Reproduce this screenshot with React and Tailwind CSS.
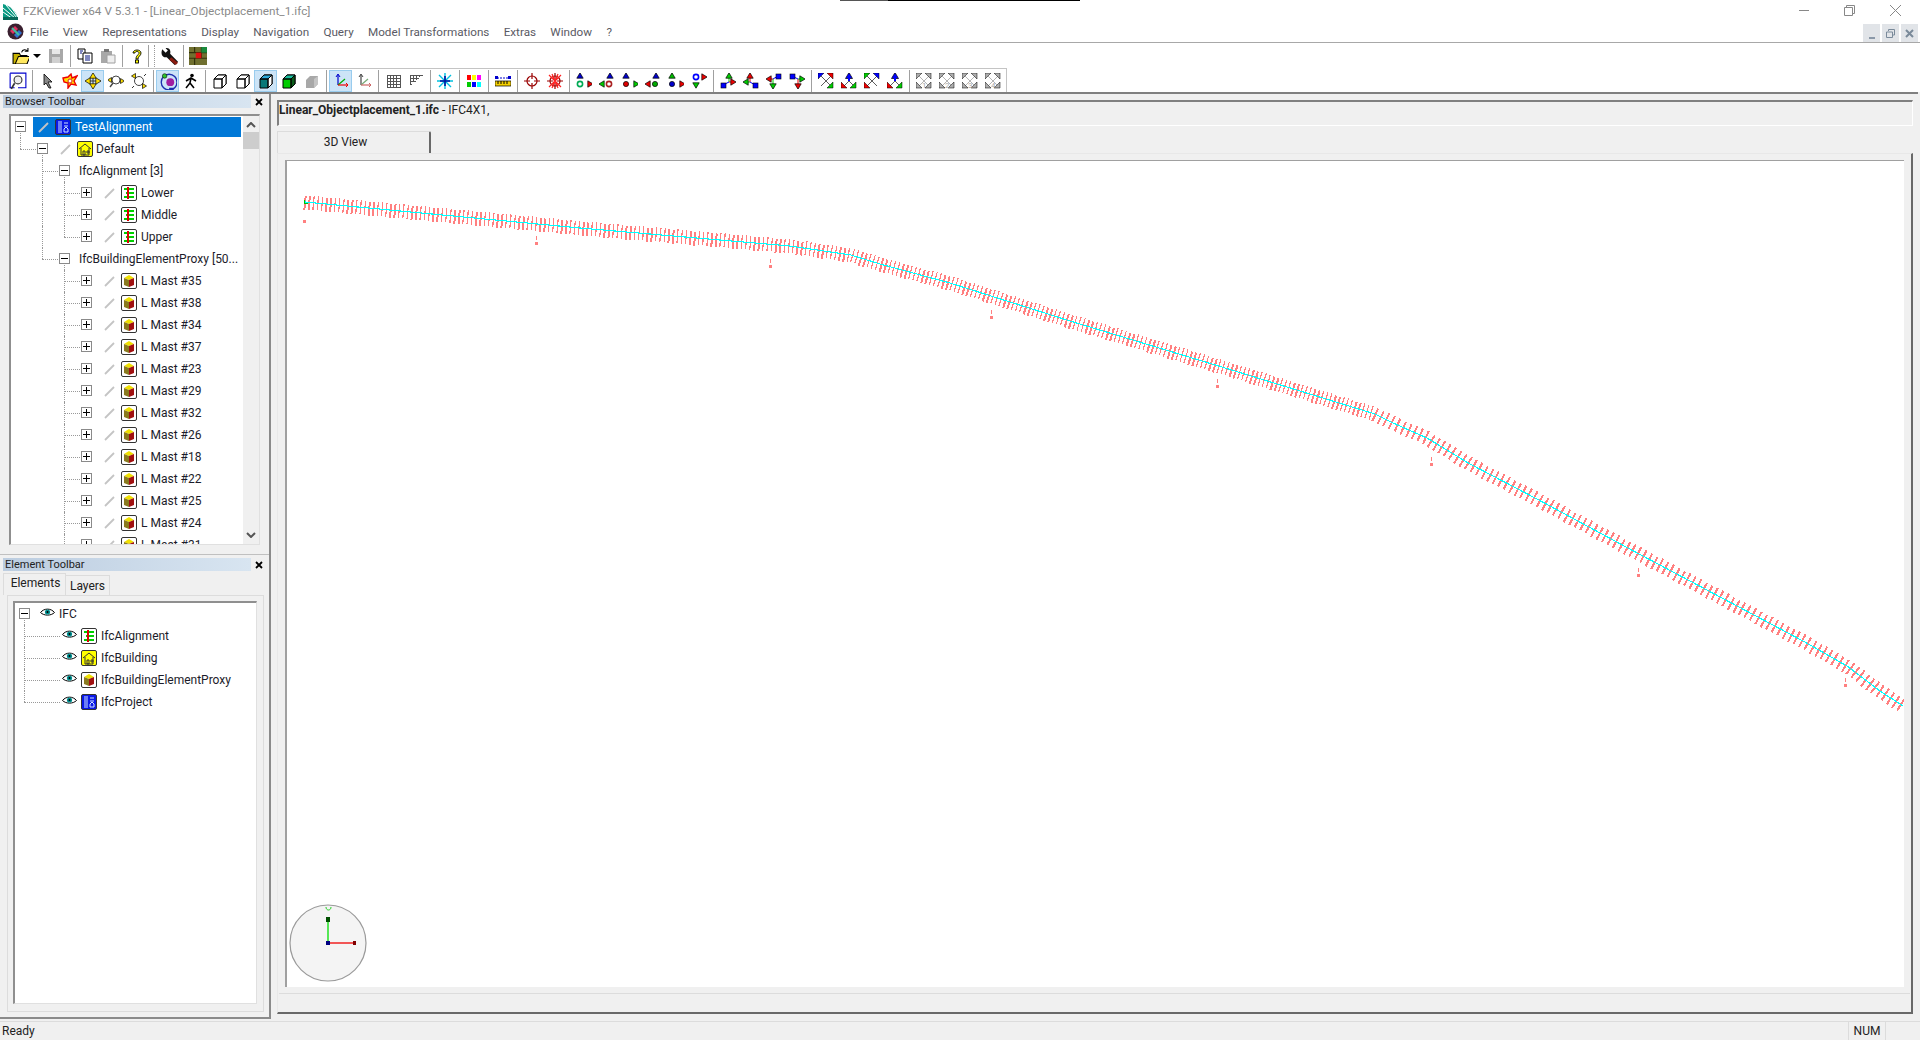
const font = "font-['Roboto','Liberation_Sans',sans-serif]";

// ---- small pixel style icons ----
const Svg = ({ children, size = 16, className = '' }) => (
  <svg width={size} height={size} viewBox="0 0 16 16" className={className}>{children}</svg>
);

const Tri = ({ x, y, d, c, r = 3.2 }) => {
  const p = {
    u: `${x},${y - r} ${x + r},${y + r - 1} ${x - r},${y + r - 1}`,
    d: `${x},${y + r} ${x + r},${y - r + 1} ${x - r},${y - r + 1}`,
    l: `${x - r},${y} ${x + r - 1},${y - r} ${x + r - 1},${y + r}`,
    r: `${x + r},${y} ${x - r + 1},${y - r} ${x - r + 1},${y + r}`,
  }[d];
  return <polygon points={p} fill={c} stroke="#000" strokeWidth="0.7" />;
};

const Dot = ({ x, y, c, ring }) => (
  <circle cx={x} cy={y} r={2.6} fill={ring ? '#fff' : c} stroke={ring ? c : '#000'} strokeWidth={ring ? 1.6 : 0.7} />
);

const ViewIcon = ({ top, side, sideColor, circle, ring }) => (
  <Svg>
    <Tri x={side === 'r' ? 4 : 11} y={3} d="u" c={top} />
    <Dot x={side === 'r' ? 4 : 10} y={11} c={circle} ring={ring} />
    {side === 'r' ? <Tri x={14} y={11} d="r" c={sideColor} /> : <Tri x={3} y={11} d="l" c={sideColor} />}
  </Svg>
);

const Triad = ({ v, vc, h, hc, sq }) => {
  const cx = sq[0] < 8 ? 9 : 7;
  const cy = sq[1] < 8 ? 6 : 9;
  return (
    <Svg>
      <path d={`M${cx} ${cy}V${v === 'u' ? 3 : 13}`} stroke={vc} fill="none" />
      <path d={`M${cx} ${cy}H${h === 'r' ? 13 : 3}`} stroke={hc} fill="none" />
      <path d={`M${cx} ${cy}L${sq[0] + 2} ${sq[1] + 2}`} stroke="#00f" fill="none" />
      <Tri x={cx} y={v === 'u' ? 3 : 13} d={v} c={vc} />
      <Tri x={h === 'r' ? 13 : 3} y={cy} d={h} c={hc} />
      <rect x={sq[0]} y={sq[1]} width="5" height="5" fill="#00f" stroke="#000" strokeWidth="0.6" />
    </Svg>
  );
};

const Corner = ({ x, y, c }) => {
  const a = x < 8 ? x : x + 6;
  const b = y < 8 ? y : y + 6;
  const sx = x < 8 ? 1 : -1;
  const sy = y < 8 ? 1 : -1;
  return <polygon points={`${a},${b} ${a + sx * 6},${b} ${a},${b + sy * 6}`} fill={c} stroke="#000" strokeWidth="0.5" />;
};

const Diagonal = ({ tl, tr, br, bl, up }) => (
  <Svg>
    <path d={up ? 'M8 8V2M8 8L3 13M8 8L13 13' : 'M3 3L13 13M13 3L3 13'} stroke="#333" strokeWidth="0.8" fill="none" />
    {tl && <Corner x={0} y={0} c={tl} />}
    {tr && <Corner x={9} y={0} c={tr} />}
    {br && <Corner x={9} y={9} c={br} />}
    {bl && <Corner x={0} y={9} c={bl} />}
    {up && <><Tri x={8} y={3} d="u" c="#00f" r={3.5} /><rect x="7" y="5" width="2" height="3" fill="#00f" /></>}
  </Svg>
);

const NumDiagonal = ({ n }) => (
  <Svg>
    <path d="M3 3L13 13M13 3L3 13" stroke="#b4b4b4" strokeWidth="1" fill="none" />
    <Corner x={0} y={0} c="#adadad" />
    <Corner x={9} y={0} c="#adadad" />
    <Corner x={9} y={9} c="#adadad" />
    <Corner x={0} y={9} c="#adadad" />
    <text x="6" y="14.5" fontSize="8" fill="#a8a8a8">{n}</text>
  </Svg>
);

const Cube = ({ top, left, right, wire }) => (
  <Svg>
    <path d="M2 6L6 2H14V11L10 15H2Z" fill={wire ? '#fff' : left} stroke="#000" />
    <path d="M2 6L6 2H14L10 6Z" fill={wire ? '#fff' : top} stroke="#000" />
    <path d="M10 6L14 2V11L10 15Z" fill={wire ? '#fff' : right} stroke="#000" />
    <path d="M2 6H10V15" fill="none" stroke="#000" />
  </Svg>
);

const Axes = ({ gray }) => (
  <Svg>
    <path d="M5 12V2" stroke={gray ? '#444' : '#00c'} strokeWidth="1.2" fill="none" />
    <path d="M5 12L12 6" stroke={gray ? '#7a7' : '#0a0'} strokeWidth="1.2" fill="none" />
    <path d="M5 12H15" stroke={gray ? '#c66' : '#e00'} strokeWidth="1.2" fill="none" />
    <path d="M3 4L5 1L7 4" stroke={gray ? '#444' : '#00c'} fill="none" />
    <path d="M13 10L15 12L13 14" stroke={gray ? '#c66' : '#e00'} fill="none" />
  </Svg>
);

const Grid = ({ partial }) => (
  <Svg>
    <path
      d={partial
        ? 'M2 2H15M2 2V12M5 2V9M8 2V7M11 2V4M2 5H11M2 8H8M2 11H4'
        : 'M2 2H15V14H2ZM5 2V14M8 2V14M11 2V14M2 5H15M2 8H15M2 11H15'}
      stroke="#555" fill="none" shapeRendering="crispEdges"
    />
  </Svg>
);

const Target = ({ crossed }) => (
  <Svg>
    <circle cx="8" cy="8" r="5" fill="none" stroke="#900" strokeWidth="1.2" />
    <path d="M8 0V6M8 10V16M0 8H6M10 8H16" stroke="#900" strokeWidth="1.2" />
    {crossed && <path d="M2 2L14 14M14 2L2 14M5 1L11 15M11 1L5 15" stroke="#f22" strokeWidth="1.2" />}
  </Svg>
);

const icons = {
  zoomWin: (
    <Svg size={18}>
      <path d="M1 1H15V14H8" fill="#fff" stroke="#00c" strokeWidth="1" />
      <path d="M1 1V14H5" fill="none" stroke="#00c" />
      <circle cx="8" cy="7" r="3.5" fill="#eee" stroke="#333" />
      <path d="M5 10L2 15" stroke="#333" strokeWidth="1.5" />
    </Svg>
  ),
  cursor: (
    <Svg>
      <path d="M5 1L13 9H9L12 15L10 15L7 10L5 12Z" fill="#888" stroke="#000" strokeWidth="0.8" />
    </Svg>
  ),
  fire: (
    <Svg>
      <path d="M1 5L6 4L9 1L10 5L15 3L12 8L14 12L9 11L6 15L6 10L2 9Z" fill="#ffdf00" stroke="#e00" strokeWidth="1.4" />
      <circle cx="8" cy="8" r="2" fill="#fff" stroke="#d22" />
    </Svg>
  ),
  move: (
    <Svg>
      <path d="M8 3V13M3 8H13" stroke="#333" />
      <Tri x={8} y={3} d="u" c="#ffe000" />
      <Tri x={8} y={13} d="d" c="#ffe000" />
      <Tri x={3} y={8} d="l" c="#ffe000" />
      <Tri x={13} y={8} d="r" c="#ffe000" />
    </Svg>
  ),
  orbit: (
    <Svg>
      <circle cx="8" cy="7" r="4" fill="#fff" stroke="#444" />
      <path d="M5 10L2 14" stroke="#444" strokeWidth="1.4" />
      <Tri x={14} y={8} d="r" c="#ffe000" r={2.5} />
      <Tri x={2} y={7} d="l" c="#ffe000" r={2.5} />
    </Svg>
  ),
  orbit2: (
    <Svg>
      <circle cx="8" cy="8" r="4.5" fill="#fff" stroke="#444" />
      <Tri x={3} y={3} d="l" c="#ffe000" r={2.5} />
      <Tri x={13} y={13} d="r" c="#ffe000" r={2.5} />
      <path d="M3 13L1 15M13 3L15 1" stroke="#333" />
    </Svg>
  ),
  spin: (
    <Svg size={18}>
      <circle cx="9" cy="9" r="7" fill="none" stroke="#1c2fb0" strokeWidth="1.2" />
      <circle cx="10" cy="9" r="3.5" fill="#a01ea0" />
      <circle cx="5" cy="3.5" r="2" fill="#2ec42e" stroke="#000" strokeWidth="0.5" />
      <path d="M13 15L9 15" stroke="#1c2fb0" strokeWidth="2" />
    </Svg>
  ),
  walk: (
    <Svg>
      <circle cx="9" cy="2.5" r="1.8" fill="#000" />
      <path d="M8 5L7 10L3 15M7 10L11 15M3 8L8 5L13 8" stroke="#000" strokeWidth="1.6" fill="none" />
    </Svg>
  ),
  cubeWire: <Cube wire />,
  cubeWhite: <Cube wire />,
  cubeTeal: <Cube top="#2ba8d8" left="#087878" right="#fff" />,
  cubeGreen: <Cube top="#1abc9c" left="#0c0" right="#0a5c1a" />,
  cubeGray: (
    <Svg>
      <path d="M2 7L6 3H14V11L10 15H2Z" fill="#a8a8a8" />
      <path d="M10 6L14 3V11L10 15Z" fill="#c4c4c4" />
    </Svg>
  ),
  axes: <Axes />,
  axesGray: <Axes gray />,
  grid: <Grid />,
  gridPart: <Grid partial />,
  snow: (
    <Svg>
      <path d="M8 0V16M0 8H16M2 2L14 14M14 2L2 14" stroke="#00c0e0" strokeWidth="1.4" />
      <path d="M8 3V13M3 8H13" stroke="#0010a0" strokeWidth="1.6" />
    </Svg>
  ),
  swatch: (
    <Svg>
      <rect x="1" y="2" width="4" height="5" fill="#f00" />
      <rect x="6" y="2" width="4" height="5" fill="#ff0" />
      <rect x="11" y="2" width="4" height="5" fill="#f0f" />
      <rect x="1" y="9" width="4" height="5" fill="#0c0" />
      <rect x="6" y="9" width="4" height="5" fill="#00f" />
      <rect x="11" y="9" width="4" height="5" fill="#0ff" />
    </Svg>
  ),
  ruler: (
    <Svg>
      <path d="M2 5H13" stroke="#00c" strokeDasharray="2 1" />
      <rect x="0" y="3" width="3" height="3" fill="#00c" />
      <rect x="13" y="3" width="3" height="3" fill="#00c" />
      <rect x="0" y="8" width="16" height="5" fill="#f5d000" stroke="#000" strokeWidth="0.7" />
      <path d="M3 8V11M6 8V11M9 8V11M12 8V11" stroke="#000" />
    </Svg>
  ),
  target: <Target />,
  targetX: <Target crossed />,
  v1: <ViewIcon top="#00c" side="r" sideColor="#e00" circle="#0a5" ring />,
  v2: <ViewIcon top="#00c" side="l" sideColor="#0c0" circle="#a22" ring />,
  v3: <ViewIcon top="#00c" side="r" sideColor="#0c0" circle="#d00" />,
  v4: <ViewIcon top="#00c" side="l" sideColor="#e00" circle="#0a0" />,
  v5: <ViewIcon top="#0b0" side="r" sideColor="#e00" circle="#00c" />,
  v6: (
    <Svg>
      <Dot x={5} y={4} c="#00f" ring />
      <Tri x={13} y={4} d="r" c="#e00" />
      <Tri x={5} y={12} d="d" c="#0c0" />
    </Svg>
  ),
  t1: <Triad v="u" vc="#0c0" h="r" hc="#e00" sq={[1, 10]} />,
  t2: <Triad v="u" vc="#e00" h="l" hc="#0c0" sq={[10, 10]} />,
  t3: <Triad v="d" vc="#0c0" h="l" hc="#e00" sq={[10, 1]} />,
  t4: <Triad v="d" vc="#e00" h="r" hc="#0c0" sq={[1, 1]} />,
  d1: <Diagonal tl="#00f" tr="#e00" br="#0c0" />,
  d2: <Diagonal up bl="#e00" br="#0c0" />,
  d3: <Diagonal tl="#0c0" tr="#00f" bl="#e00" />,
  d4: <Diagonal up bl="#e00" br="#0c0" />,
  n1: <NumDiagonal n="1" />,
  n2: <NumDiagonal n="2" />,
  n3: <NumDiagonal n="3" />,
  n4: <NumDiagonal n="4" />,
  open: (
    <Svg size={17}>
      <path d="M1 6H7L8 8H14V16H1Z" fill="#c8b400" stroke="#000" />
      <path d="M3 16L6 9H17L14 16Z" fill="#ffe860" stroke="#000" />
      <path d="M9 5C10 2 13 2 15 4M15 1V4H12" fill="none" stroke="#000" />
    </Svg>
  ),
  save: (
    <Svg>
      <path d="M1 1H15V15H1Z" fill="#a8a8a8" />
      <rect x="4" y="1" width="8" height="5" fill="#e8e8e8" />
      <rect x="4" y="9" width="8" height="6" fill="#d0d0d0" />
    </Svg>
  ),
  copy: (
    <Svg>
      <path d="M1 1H8V11H1Z" fill="#fff" stroke="#000" />
      <path d="M6 5H15V15H6Z" fill="#fff" stroke="#000" />
      <path d="M3 3H6M3 5H5M8 8H13M8 10H13M8 12H13" stroke="#001080" />
    </Svg>
  ),
  paste: (
    <Svg>
      <path d="M1 3H12V15H1Z" fill="#a8a8a8" />
      <rect x="4" y="1" width="5" height="3" fill="#777" />
      <path d="M7 7H15V15H7Z" fill="#eee" stroke="#a0a0a0" />
    </Svg>
  ),
  help: (
    <Svg>
      <path d="M4 5C4 1 12 1 12 5C12 8 9 8 9 11H7C7 7 10 7 10 5C10 3 6 3 6 5Z" fill="#ff0" stroke="#000" strokeWidth="0.9" />
      <rect x="6.5" y="12" width="3" height="3" fill="#ff0" stroke="#000" strokeWidth="0.9" />
    </Svg>
  ),
  wrench: (
    <Svg size={18}>
      <path d="M2 2L5 5L7 3L5 1C8 0 10 3 9 6L16 13L13 16L6 9C3 10 0 7 2 2Z" fill="#111" />
      <path d="M10 9L16 14L14 16L8 11Z" fill="#8a1c10" />
    </Svg>
  ),
  brick: (
    <Svg size={18}>
      <rect x="0" y="0" width="16" height="16" fill="#707030" />
      <path d="M0 5H16M0 10H16M5 0V5M11 5V10M5 10V16M11 0V5" stroke="#30300c" />
      <rect x="6" y="5" width="5" height="5" fill="#e01010" />
      <path d="M11 0L16 0V5L11 5Z" fill="#1a8a3c" />
    </Svg>
  ),
};

const row1 = [
  { w: 'w-[36px]', icon: 'open', caret: true },
  { icon: 'save' }, 'sep',
  { icon: 'copy' }, { icon: 'paste' }, 'sep',
  { icon: 'help' }, 'sep2',
  { icon: 'wrench' }, 'sep',
  { icon: 'brick' },
];

const row2 = [
  { icon: 'zoomWin' }, 'sep',
  { icon: 'cursor' }, { icon: 'fire' }, { icon: 'move', active: true }, { icon: 'orbit' }, { icon: 'orbit2' }, 'sep',
  { icon: 'spin', active: true }, { icon: 'walk' }, 'sep',
  { icon: 'cubeWire' }, { icon: 'cubeWhite' }, { icon: 'cubeTeal', active: true }, { icon: 'cubeGreen' }, { icon: 'cubeGray' }, 'sep',
  { icon: 'axes', active: true }, { icon: 'axesGray' }, 'sep',
  { icon: 'grid' }, { icon: 'gridPart' }, 'sep',
  { icon: 'snow' }, 'sep',
  { icon: 'swatch' }, 'sep',
  { icon: 'ruler' }, 'sep',
  { icon: 'target' }, { icon: 'targetX' }, 'sep',
  { icon: 'v1' }, { icon: 'v2' }, { icon: 'v3' }, { icon: 'v4' }, { icon: 'v5' }, { icon: 'v6' }, 'sep',
  { icon: 't1' }, { icon: 't2' }, { icon: 't3' }, { icon: 't4' }, 'sep',
  { icon: 'd1' }, { icon: 'd2' }, { icon: 'd3' }, { icon: 'd4' }, 'sep',
  { icon: 'n1' }, { icon: 'n2' }, { icon: 'n3' }, { icon: 'n4' },
];

function ToolRow({ items }) {
  return (
    <div className="flex items-center h-full">
      {items.map((it, i) => {
        if (it === 'sep') return <div key={i} className="w-[6px] h-[22px] flex justify-center"><div className="w-px h-full bg-[#a0a0a0]" /></div>;
        if (it === 'sep2') {
          return (
            <div key={i} className="w-[9px] h-[22px] flex justify-between">
              <div className="w-px h-full bg-[#a0a0a0]" />
              <div className="w-px h-full border-l border-dotted border-[#9a9a9a] mr-[2px]" />
            </div>
          );
        }
        return (
          <div key={i} className={`${it.w || 'w-[23px]'} h-[22px] flex items-center justify-center gap-[4px] ${it.active ? 'bg-[#cce4f7] border border-[#99ccee]' : ''}`}>
            {icons[it.icon]}
            {it.caret && <div className="w-0 h-0 border-x-[4px] border-x-transparent border-t-[4px] border-t-black" />}
          </div>
        );
      })}
    </div>
  );
}

// ---- tree ----
const Pencil = () => (
  <svg width="11" height="11" viewBox="0 0 11 11"><path d="M1 10L10 1" stroke="#c4c4c4" strokeWidth="1.8" /></svg>
);

const Eye = () => (
  <svg width="15" height="9" viewBox="0 0 15 9" className="-mt-[3px]">
    <path d="M0.5 4.5C4 0 11 0 14.5 4.5C11 8 4 8 0.5 4.5Z" fill="#fff" stroke="#000" />
    <circle cx="7.5" cy="4" r="2.6" fill="#009090" />
    <circle cx="7.5" cy="4" r="1" fill="#000" />
  </svg>
);

const BoxIcon = ({ children, bg = 'bg-white' }) => (
  <div className={`w-[16px] h-[16px] rounded-[2px] border border-[#333] ${bg} shrink-0 -mt-[1px]`}>
    <svg width="14" height="14" viewBox="0 0 14 14" className="block">{children}</svg>
  </div>
);

const AlignIcon = () => (
  <BoxIcon>
    <rect x="2" y="2" width="10" height="2" fill="#00d000" />
    <rect x="4" y="6" width="8" height="2" fill="#00d000" />
    <rect x="2" y="10" width="10" height="2" fill="#00d000" />
    <rect x="5" y="1" width="2" height="12" fill="#e00000" />
  </BoxIcon>
);

const BuildingIcon = () => (
  <BoxIcon bg="bg-[#ffff00]">
    <path d="M1 7L7 2L13 7M3 6V13H11V6M5 9H7V13H5ZM9 9H11V11H9Z" fill="none" stroke="#333" />
  </BoxIcon>
);

const ProxyIcon = () => (
  <BoxIcon>
    <path d="M2 4L7 1L12 4L7 6Z" fill="#f0e000" />
    <path d="M2 4L7 6V13L2 11Z" fill="#8a7a20" />
    <path d="M7 6L12 4V11L7 13Z" fill="#a01010" />
  </BoxIcon>
);

const ProjectIcon = () => (
  <BoxIcon bg="bg-[#0a18e8]">
    <path d="M2 2H6M2 4H6M2 6H6M2 8H6M2 10H6M2 12H6M8 3H12M8 6H12M8 9L10 7L12 9V12H8Z" stroke="#cfe4ff" fill="none" />
  </BoxIcon>
);

const Expander = ({ open }) => (
  <div className="w-[11px] h-[11px] border border-[#8a8a8a] bg-white flex items-center justify-center relative z-10 shrink-0">
    <div className="w-[7px] h-px bg-black" />
    {!open && <div className="absolute w-px h-[7px] bg-black" />}
  </div>
);

const Guide = ({ x, part }) => (
  <div
    className={`absolute w-0 border-l border-dotted border-[#999] ${part === 'top' ? 'top-0 h-1/2' : part === 'bot' ? 'top-1/2 h-1/2' : 'top-0 h-full'}`}
    style={{ left: x }}
  />
);

function TreeRow({ cx, open, noExpander, from, full = [], top = [], bot = [], children, pl }) {
  return (
    <div className="relative h-[22px] flex items-center" style={{ paddingLeft: pl }}>
      {full.map(x => <Guide key={x} x={x} />)}
      {top.map(x => <Guide key={x} x={x} part="top" />)}
      {bot.map(x => <Guide key={x} x={x} part="bot" />)}
      {from !== undefined && (
        <div className="absolute top-1/2 h-0 border-t border-dotted border-[#999]" style={{ left: from, width: cx - from }} />
      )}
      {!noExpander && (
        <div className="absolute top-[5px]" style={{ left: cx - 5 }}><Expander open={open} /></div>
      )}
      {children}
    </div>
  );
}

const masts = [35, 38, 34, 37, 23, 29, 32, 26, 18, 22, 25, 24, 31];

function BrowserTree() {
  const label = 'text-[12px] text-[#1c1c2a] whitespace-nowrap leading-none';
  return (
    <div className="pr-[2px]">
      <TreeRow cx={9} open bot={[9]}>
        <div className="absolute left-[22px] top-px right-[0px] h-[20px] bg-[#0078d7] flex items-center pl-[5px]">
          <Pencil />
          <div className="ml-[6px]"><ProjectIcon /></div>
          <span className="ml-[4px] text-[12px] text-white">TestAlignment</span>
        </div>
      </TreeRow>
      <TreeRow cx={31} open top={[9]} from={9} bot={[31]} pl={49}>
        <Pencil />
        <div className="ml-[6px]"><BuildingIcon /></div>
        <span className={`${label} ml-[3px]`}>Default</span>
      </TreeRow>
      <TreeRow cx={53} open full={[31]} from={31} bot={[53]} pl={68}>
        <span className={label}>IfcAlignment [3]</span>
      </TreeRow>
      {['Lower', 'Middle', 'Upper'].map((t, i) => (
        <TreeRow key={t} cx={75} full={i < 2 ? [31, 53] : [31]} top={i === 2 ? [53] : []} from={53} pl={93}>
          <Pencil />
          <div className="ml-[6px]"><AlignIcon /></div>
          <span className={`${label} ml-[4px]`}>{t}</span>
        </TreeRow>
      ))}
      <TreeRow cx={53} open top={[31]} from={31} bot={[53]} pl={68}>
        <span className={label}>IfcBuildingElementProxy [50...</span>
      </TreeRow>
      {masts.map(m => (
        <TreeRow key={m} cx={75} full={[53]} from={53} pl={93}>
          <Pencil />
          <div className="ml-[6px]"><ProxyIcon /></div>
          <span className={`${label} ml-[4px]`}>L Mast #{m}</span>
        </TreeRow>
      ))}
    </div>
  );
}

function ElementTree() {
  const rows = [
    ['IfcAlignment', <AlignIcon key="a" />],
    ['IfcBuilding', <BuildingIcon key="b" />],
    ['IfcBuildingElementProxy', <ProxyIcon key="c" />],
    ['IfcProject', <ProjectIcon key="d" />],
  ];
  const label = 'text-[12px] text-[#1c1c2a] whitespace-nowrap leading-none';
  return (
    <div>
      <TreeRow cx={9} open bot={[9]} pl={25}>
        <Eye />
        <span className={`${label} ml-[4px]`}>IFC</span>
      </TreeRow>
      {rows.map(([t, ic], i) => (
        <TreeRow key={t} cx={45} noExpander full={i < 3 ? [9] : []} top={i === 3 ? [9] : []} from={9} pl={47}>
          <Eye />
          <div className="ml-[4px]">{ic}</div>
          <span className={`${label} ml-[4px]`}>{t}</span>
        </TreeRow>
      ))}
    </div>
  );
}

const PanelHeader = ({ title }) => (
  <div className="flex items-center h-[13px]">
    <div className="ml-[3px] w-[248px] h-[13px] bg-gradient-to-r from-[#bccde0] to-[#d8e5f1] pl-[2px] text-[11px] leading-[14px] text-[#222] whitespace-nowrap">{title}</div>
    <svg width="8" height="8" viewBox="0 0 8 8" className="ml-[4px]"><path d="M1 1L7 7M7 1L1 7" stroke="#000" strokeWidth="1.8" /></svg>
  </div>
);

// ---- the alignment curve on the 3D canvas ----
const curve = [
  [305, 201], [580, 227], [790, 245], [851, 254], [880, 263], [950, 282], [1070, 320], [1212, 363], [1375, 413],
  [1393, 422], [1427, 437], [1470, 463], [1537, 498], [1641, 554], [1803, 640], [1847, 665], [1880, 690], [1903, 705],
];

function buildTicks() {
  const thin = [];
  const wide = [];
  let n = 0;
  let rest = 0;
  for (let i = 0; i < curve.length - 1; i++) {
    const [x1, y1] = curve[i];
    const [x2, y2] = curve[i + 1];
    const len = Math.hypot(x2 - x1, y2 - y1);
    const ux = (x2 - x1) / len;
    const uy = (y2 - y1) / len;
    const step = x1 < 1375 ? 4.3 : 6.2;
    let s = rest;
    for (; s < len; s += step) {
      const x = x1 + ux * s;
      const y = y1 + uy * s;
      const lean = n % 5 < 2 ? 0.8 : 0;
      const seg = `M${(x + uy * 7).toFixed(1)} ${(y - ux * 7 + lean).toFixed(1)}L${(x - uy * 7).toFixed(1)} ${(y + ux * 7 + lean).toFixed(1)}`;
      if (n % 5 < 2 || x1 >= 1375) wide.push(seg);
      else thin.push(seg);
      n++;
    }
    rest = s - len;
  }
  return { thin: thin.join(''), wide: wide.join('') };
}

const markers = [[303, 219], [535, 241], [769, 264], [990, 315], [1216, 384], [1430, 462], [1637, 573], [1844, 683]];

function Canvas() {
  const { thin, wide } = buildTicks();
  const line = curve.map(p => p.join(',')).join(' ');
  return (
    <svg viewBox="287 160 1617 826" className="absolute inset-0 w-full h-full" shapeRendering="crispEdges">
      <path d={thin} stroke="#ff8080" strokeWidth="1.2" fill="none" />
      <path d={wide} stroke="#ff8080" strokeWidth="2" fill="none" />
      <polyline points={line} stroke="#00ffff" strokeWidth="1.1" fill="none" />
      <path d="M304 199V202H308" stroke="#00c000" fill="none" />
      {markers.map(([x, y]) => <rect key={x} x={x} y={y} width="3" height="3" fill="#ff8080" />)}
      {markers.slice(1).map(([x, y]) => <path key={x} d={`M${x + 1} ${y - 6}V${y - 2}`} stroke="#ff8080" />)}
      <g shapeRendering="auto">
        <circle cx="328" cy="942" r="38" fill="#f4f4f4" stroke="#9a9a9a" strokeWidth="1.2" />
        <path d="M328 942V918" stroke="#00e000" strokeWidth="1.3" />
        <path d="M328 942H354" stroke="#f00000" strokeWidth="1.3" />
        <path d="M326 916H330V921H326Z" fill="#005000" />
        <path d="M353 940H356V944H353Z" fill="#800000" />
        <rect x="326" y="940" width="4" height="4" fill="#000080" />
        <path d="M326 906C326 910 331 910 331 906" stroke="#20d020" strokeWidth="1" fill="none" />
      </g>
    </svg>
  );
}

const menus = ['File', 'View', 'Representations', 'Display', 'Navigation', 'Query', 'Model Transformations', 'Extras', 'Window', '?'];

export default function App() {
  return (
    <div className={`${font} w-[1920px] h-[1040px] flex flex-col bg-[#f0f0f0] overflow-hidden`}>
      {/* title bar */}
      <div className="relative h-[21px] bg-white flex items-center shrink-0">
        <svg width="17" height="17" viewBox="0 0 17 17" className="ml-[2px] mt-[1px]">
          <path d="M1 3L1 16H16C15 9 9 3 1 1Z" fill="#0a9a82" />
          <path d="M1 5L13 15M4 2L15 15M1 9L11 16M9 4L16 14" stroke="#fff" strokeWidth="1" />
          <path d="M1 14H16V17H1Z" fill="#086a5a" />
        </svg>
        <span className="ml-[4px] mt-[2px] text-[11.75px] text-[#8a8a8a]">FZKViewer x64 V 5.3.1 - [Linear_Objectplacement_1.ifc]</span>
        <div className="absolute top-0 left-[840px] w-[48px] h-px bg-[#555]" />
        <div className="absolute top-0 left-[888px] w-[192px] h-px bg-black" />
        <svg width="10" height="1" className="absolute left-[1799px] top-[10px]"><rect width="10" height="1" fill="#888" /></svg>
        <svg width="11" height="11" viewBox="0 0 11 11" className="absolute left-[1844px] top-[5px]"><path d="M2.5 2.5V.5H10.5V8.5H8.5M.5 2.5H8.5V10.5H.5Z" fill="none" stroke="#888" /></svg>
        <svg width="11" height="11" viewBox="0 0 11 11" className="absolute left-[1890px] top-[5px]"><path d="M0 0L11 11M11 0L0 11" stroke="#888" /></svg>
      </div>

      {/* menu bar */}
      <div className="relative h-[22px] bg-white border-b border-[#a8a8a8] flex items-center shrink-0">
        <svg width="17" height="17" viewBox="0 0 17 17" className="ml-[7px]">
          <circle cx="8.5" cy="8.5" r="8" fill="#3a2030" />
          <path d="M3 8L8 3L11 6L6 11Z" fill="#e03060" />
          <path d="M7 12L12 7L15 10L10 15Z" fill="#3070d0" />
          <path d="M5 5L12 12" stroke="#40c0a0" strokeWidth="2" />
        </svg>
        <div className="flex ml-[6px] mt-[2px] text-[11.7px] text-[#5a5a64] gap-[14.3px]">
          {menus.map(m => <span key={m}>{m}</span>)}
        </div>
        <div className="absolute right-[2px] top-[3px] h-[18px] flex gap-[2px]">
          <div className="w-[17px] h-full bg-[#e1e4e8] flex items-end justify-center pb-[3px]"><div className="w-[6px] h-[2px] bg-[#8a98a8]" /></div>
          <div className="w-[17px] h-full bg-[#e1e4e8] flex items-center justify-center">
            <svg width="9" height="9" viewBox="0 0 9 9"><path d="M2.5 2V.5H8.5V6H7M.5 3H6.5V8.5H.5Z" fill="none" stroke="#7a8a9a" /></svg>
          </div>
          <div className="w-[17px] h-full bg-[#e1e4e8] flex items-center justify-center">
            <svg width="9" height="9" viewBox="0 0 9 9"><path d="M1 1L8 8M8 1L1 8" stroke="#7a8a9a" strokeWidth="2" /></svg>
          </div>
        </div>
      </div>

      {/* toolbars */}
      <div className="bg-white shrink-0">
        <div className="h-[25px] pl-[8px]"><ToolRow items={row1} /></div>
        <div className="h-[24px] pl-[6px] w-[1007px] border-t border-[#c4c4c4] border-r"><ToolRow items={row2} /></div>
      </div>
      <div className="h-[2px] bg-[#808080] mr-[2px] shrink-0" />

      {/* main */}
      <div className="flex flex-1 min-h-0">
        <div className="w-[271px] shrink-0 flex flex-col border-r-2 border-b-2 border-[#8a8a8a] mb-[2px] pt-[1px]">
          <PanelHeader title="Browser Toolbar" />
          <div className="mt-[6px] ml-[9px] w-[251px] h-[431px] shrink-0 bg-white border-t-2 border-l-2 border-[#8f8f8f] border-r border-b border-r-[#e0e0e0] border-b-[#e0e0e0] flex overflow-hidden">
            <div className="flex-1 min-w-0 overflow-hidden"><BrowserTree /></div>
            <div className="w-[16px] shrink-0 bg-[#f0f0f0] flex flex-col items-center">
              <svg width="10" height="6" viewBox="0 0 10 6" className="mt-[6px]"><path d="M1 5L5 1L9 5" fill="none" stroke="#555" strokeWidth="2" /></svg>
              <div className="w-full h-[17px] bg-[#cdcdcd] mt-[4px]" />
              <svg width="10" height="6" viewBox="0 0 10 6" className="mt-auto mb-[6px]"><path d="M1 1L5 5L9 1" fill="none" stroke="#555" strokeWidth="2" /></svg>
            </div>
          </div>
          <div className="h-px bg-[#c0c0c0] mt-[9px] shrink-0" />
          <div className="mt-[3px]"><PanelHeader title="Element Toolbar" /></div>
          <div className="flex items-end ml-[3px] mt-[2px] h-[22px] shrink-0 text-[12px] text-[#222]">
            <div className="w-[63px] h-[22px] bg-[#f0f0f0] border border-b-0 border-[#dcdcdc] flex items-center justify-center pb-[3px] pl-[2px]">Elements</div>
            <div className="w-[44px] h-[20px] border border-b-0 border-l-0 border-[#dcdcdc] flex items-center justify-center">Layers</div>
          </div>
          <div className="ml-[7px] w-[257px] h-[417px] shrink-0 border border-[#dcdcdc] pl-[5px] pt-[6px]">
            <div className="w-[244px] h-[403px] bg-white border-t-2 border-l-2 border-[#8f8f8f] border-r border-b border-r-[#e0e0e0] border-b-[#e0e0e0] -mt-px">
              <ElementTree />
            </div>
          </div>
        </div>

        <div className="flex-1 min-w-0 flex flex-col pt-[6px] pl-[6px] pr-[7px]">
          <div className="h-[26px] shrink-0 border-t-2 border-l-2 border-[#808080] border-r border-b border-r-white border-b-white flex items-center pb-[7px] text-[12px] text-[#222]">
            <span className="font-bold">Linear_Objectplacement_1.ifc</span>
            <span>&nbsp;- IFC4X1,</span>
          </div>
          <div className="mt-[5px] h-[22px] w-[154px] shrink-0 bg-[#f0f0f0] border-t border-l border-r-2 border-t-[#dcdcdc] border-l-[#dcdcdc] border-r-[#696969] rounded-tr-[2px] flex items-center justify-center text-[12px] text-[#222] pr-[16px] pb-[2px]">3D View</div>
          <div className="h-[861px] shrink-0 border-l border-t border-[#e8e8e8] border-r-2 border-b-2 border-r-[#696969] border-b-[#696969] flex flex-col pl-[7px] pr-[7px] pt-[6px]">
            <div className="relative h-[827px] shrink-0 bg-white border-l-2 border-t border-[#a0a0a0] overflow-hidden"><Canvas /></div>
            <div className="h-px bg-[#dcdcdc] mt-[6px] -mx-[6px]" />
          </div>
        </div>
      </div>

      {/* status bar */}
      <div className="h-[19px] shrink-0 border-t border-[#dcdcdc] flex items-center justify-between text-[12px] text-[#222]">
        <span className="ml-[2px]">Ready</span>
        <div className="h-full w-[38px] mr-[34px] border-x border-[#dcdcdc] flex items-center justify-center">NUM</div>
      </div>
    </div>
  );
}
